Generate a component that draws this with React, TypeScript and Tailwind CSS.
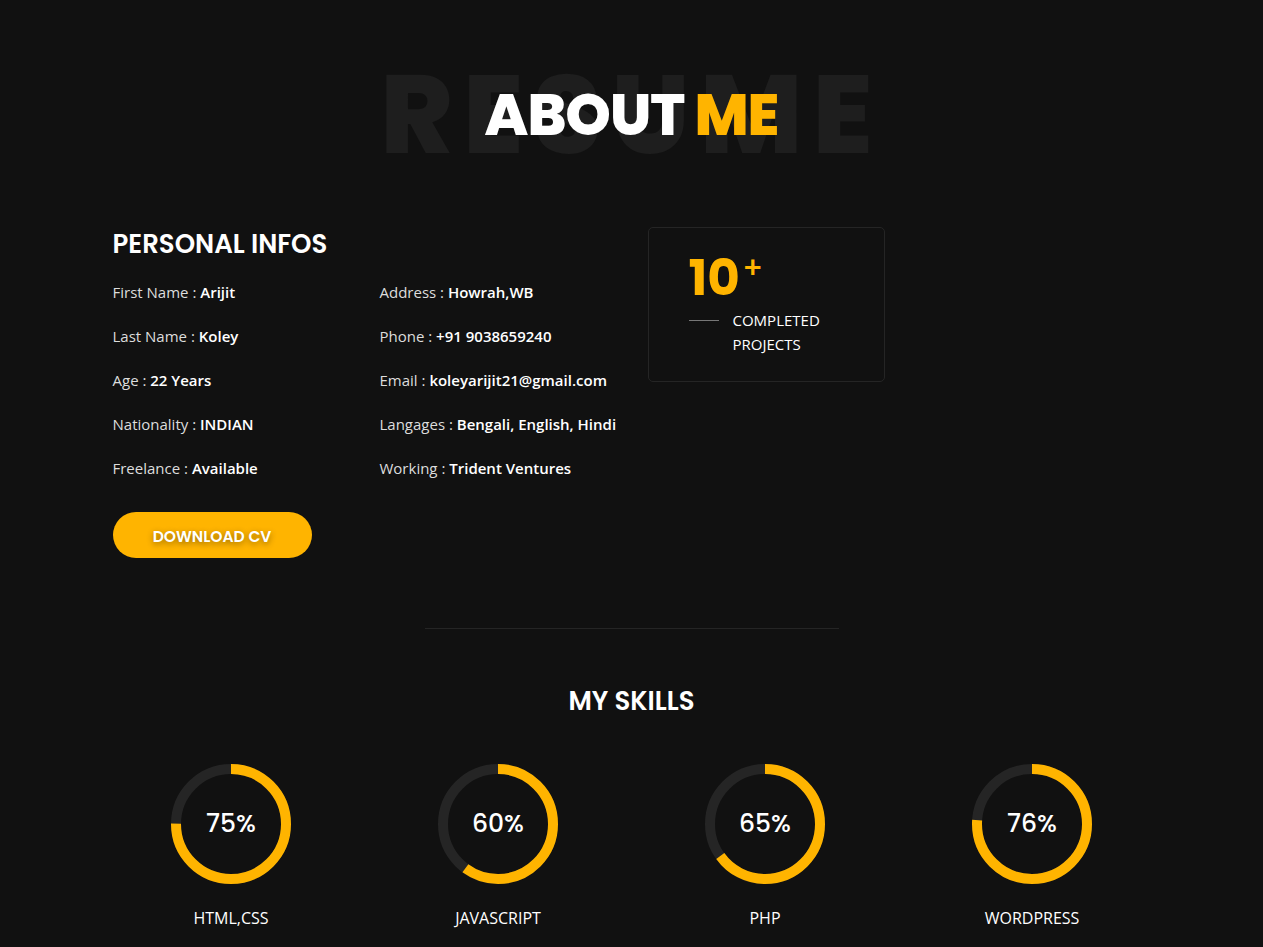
import React from 'react'

const heading = { fontFamily: 'Poppins, Inter, "Noto Sans", sans-serif' }
const body = { fontFamily: '"Open Sans", "Noto Sans", sans-serif' }

const leftInfos = [
  ['First Name', 'Arijit'],
  ['Last Name', 'Koley'],
  ['Age', '22 Years'],
  ['Nationality', 'INDIAN'],
  ['Freelance', 'Available'],
]

const rightInfos = [
  ['Address', 'Howrah,WB'],
  ['Phone', '+91 9038659240'],
  ['Email', 'koleyarijit21@gmail.com'],
  ['Langages', 'Bengali, English, Hindi'],
  ['Working', 'Trident Ventures'],
]

const skills = [
  { name: 'HTML,CSS', value: 75 },
  { name: 'JAVASCRIPT', value: 60 },
  { name: 'PHP', value: 65 },
  { name: 'WORDPRESS', value: 76 },
]

function InfoList({ items }: { items: string[][] }) {
  return (
    <ul className="flex flex-col gap-5">
      {items.map(([label, value]) => (
        <li key={label} className="text-[15px] leading-6 text-[#dddddd]" style={body}>
          {label} : <span className="font-semibold text-white">{value}</span>
        </li>
      ))}
    </ul>
  )
}

function Ring({ value }: { value: number }) {
  const r = 55
  const c = 2 * Math.PI * r
  return (
    <div className="relative w-[120px] h-[120px]">
      <svg width="120" height="120" viewBox="0 0 120 120" className="-rotate-90">
        <circle cx="60" cy="60" r={r} fill="none" stroke="#252525" strokeWidth="10" />
        <circle
          cx="60"
          cy="60"
          r={r}
          fill="none"
          stroke="#ffb400"
          strokeWidth="10"
          strokeDasharray={`${(c * value) / 100} ${c}`}
        />
      </svg>
      <span
        className="absolute inset-0 flex items-center justify-center text-[25px] font-medium text-white"
        style={heading}
      >
        {value}%
      </span>
    </div>
  )
}

export default function App() {
  return (
    <div className="min-h-screen bg-[#111111] text-white pt-[58px] pb-10">
      {/* title */}
      <div className="relative flex h-[114px] items-center justify-center">
        <span
          className="absolute inset-0 flex items-center justify-center text-[110px] font-extrabold leading-none tracking-[10px] text-[#1e1e1e] select-none"
          style={heading}
        >
          RESUME
        </span>
        <h1 className="relative text-[58px] font-extrabold leading-none tracking-[-1px]" style={heading}>
          ABOUT <span className="text-[#ffb400]">ME</span>
        </h1>
      </div>

      <div className="mx-auto w-[1038px]">
        <div className="mt-[59px] flex">
          <div className="w-[519px]">
            <h3 className="text-[26px] font-semibold leading-none uppercase" style={heading}>
              Personal Infos
            </h3>
            <div className="mt-[23px] flex">
              <div className="w-[267px]">
                <InfoList items={leftInfos} />
              </div>
              <div>
                <InfoList items={rightInfos} />
              </div>
            </div>
            <button
              className="mt-[32px] h-[46px] w-[199px] rounded-full bg-[#ffb400] pt-[3px] text-[15.5px] font-semibold uppercase text-white [text-shadow:0_2px_6px_rgba(0,0,0,0.45)]"
              style={heading}
            >
              Download CV
            </button>
          </div>

          <div className="ml-[16px] mt-[-4px]">
            <div className="h-[155px] w-[237px] rounded-[5px] border border-[#252525] pl-10 pt-[25px]">
              <div className="flex items-start text-[#ffb400]" style={heading}>
                <span className="text-[50px] font-bold leading-none">10</span>
                <span className="ml-0.5 text-[30px] font-medium leading-none">+</span>
              </div>
              <div className="mt-[5px] flex">
                <span className="mt-[12px] h-px w-[30px] bg-[#777777]" />
                <p className="ml-[14px] text-[15px] uppercase leading-6 text-white" style={body}>
                  Completed
                  <br />
                  Projects
                </p>
              </div>
            </div>
          </div>
        </div>

        <hr className="mx-auto mt-[70px] w-[414px] border-t border-[#252525]" />

        <h3 className="mt-[59px] text-center text-[26px] font-semibold leading-none uppercase" style={heading}>
          My Skills
        </h3>

        <div className="-mx-[15px] mt-[50px] grid grid-cols-4">
          {skills.map((s) => (
            <div key={s.name} className="flex flex-col items-center">
              <Ring value={s.value} />
              <p className="mt-[22px] text-[16px] uppercase text-white" style={body}>
                {s.name}
              </p>
            </div>
          ))}
        </div>
      </div>
    </div>
  )
}
